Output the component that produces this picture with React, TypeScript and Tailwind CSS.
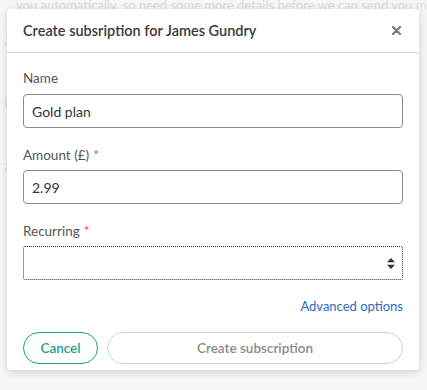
import { useState } from "react";

const Req = () => <span className="ml-1 text-[#d9534f]">*</span>;

export default function App() {
  const [name, setName] = useState("Gold plan");
  const [amount, setAmount] = useState("2.99");

  return (
    <div className="relative h-[390px] w-[427px] overflow-hidden bg-[#f6f6f6] font-['Lato',sans-serif]">
      {/* page behind the overlay */}
      <div className="px-4 text-[13px] leading-[10px] text-[#dcdcdc] whitespace-nowrap">
        you automatically, so need some more details before we can send you mo
      </div>
      <div className="mt-4 ml-1 flex flex-col gap-9 text-[18px] text-[#e4e4e4]">
        <span>a</span>
        <span>0</span>
        <span>a</span>
      </div>

      {/* modal */}
      <div className="absolute left-[7px] top-[9px] w-[412px] rounded-[4px] bg-white shadow-[0_2px_8px_rgba(0,0,0,0.15)]">
        <div className="flex h-[44px] items-center justify-between border-b border-[#d6d6d6] pl-[16px] pr-[18px]">
          <h2 className="text-[14.5px] font-semibold text-[#3a3a3a]">
            Create subsription for James Gundry
          </h2>
          <svg width="9" height="9" viewBox="0 0 9 9" className="text-[#7a7a7a]">
            <path d="M1 1 L8 8 M8 1 L1 8" stroke="currentColor" strokeWidth="2.2" strokeLinecap="round" />
          </svg>
        </div>

        <div className="px-[16px] pt-[16px] pb-[6px]">
          <label className="block text-[13.5px] leading-[18px] text-[#555]">Name</label>
          <input
            value={name}
            onChange={(e) => setName(e.target.value)}
            className="mt-[7px] block h-[34px] w-full rounded-[4px] border border-[#8a8a8a] px-[8px] text-[14px] text-[#333] outline-none"
          />

          <label className="mt-[18px] block text-[13.5px] leading-[18px] text-[#555]">
            Amount (£)
            <Req />
          </label>
          <input
            value={amount}
            onChange={(e) => setAmount(e.target.value)}
            className="mt-[6px] block h-[34px] w-full rounded-[4px] border border-[#8a8a8a] px-[8px] text-[14px] text-[#333] outline-none"
          />

          <label className="mt-[18px] block text-[13.5px] leading-[18px] text-[#555]">
            Recurring
            <Req />
          </label>
          <div className="mt-[6px] flex h-[34px] w-full items-center justify-end rounded-[2px] border border-dotted border-[#333] pr-[7px]">
            <svg width="8" height="11" viewBox="0 0 8 11" className="text-[#333]">
              <path d="M4 0 L8 4.2 H0 Z M4 11 L0 6.8 H8 Z" fill="currentColor" />
            </svg>
          </div>

          <div className="mt-[17px] flex justify-end">
            <a href="#" className="text-[13px] leading-[18px] text-[#2a6ebb]">
              Advanced options
            </a>
          </div>

          <div className="mt-[17px] flex gap-[9px] pb-[0px]">
            <button className="h-[32px] w-[75px] rounded-full border border-[#1aa37a] text-[13.5px] font-semibold text-[#1aa37a]">
              Cancel
            </button>
            <button className="h-[32px] flex-1 rounded-full border border-[#d4d4d4] text-[13.5px] font-semibold text-[#8a8a8a]">
              Create subscription
            </button>
          </div>
        </div>
      </div>
    </div>
  );
}
